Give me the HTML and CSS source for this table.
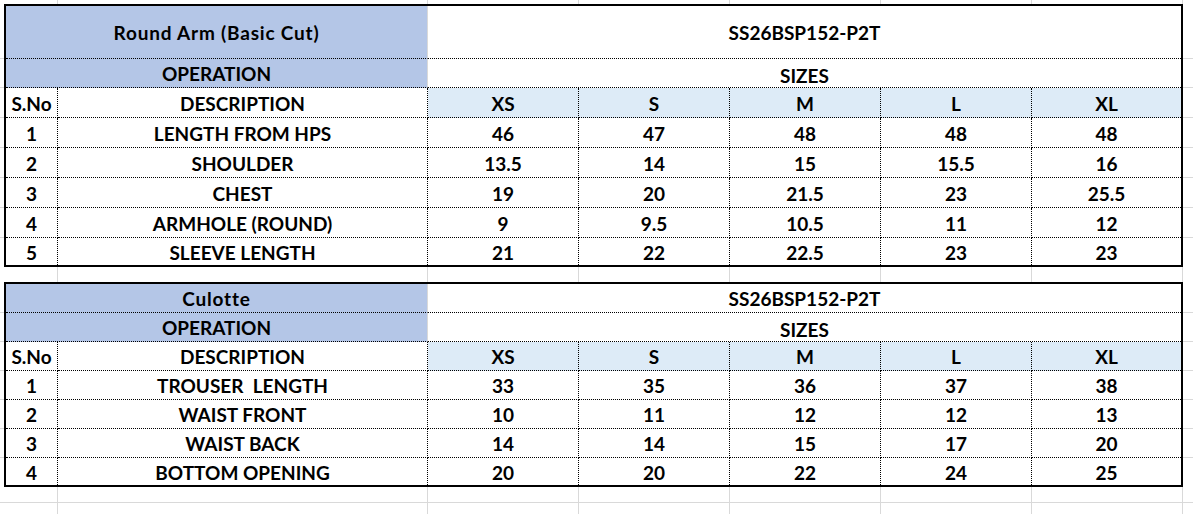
FILE: index.html
```html
<!DOCTYPE html>
<html lang="en">
<head>
<meta charset="utf-8">
<title>Spec sheet</title>
<link rel="stylesheet" href="styles.css">
</head>
<body>
<div class="sheet">
  <div class="spec spec-1">
    <div class="row">
      <div class="c blue span2 name">Round Arm (Basic Cut)</div>
      <div class="c span5">SS26BSP152-P2T</div>
    </div>
    <div class="row">
      <div class="c blue span2">OPERATION</div>
      <div class="c span5 sizes">SIZES</div>
    </div>
    <div class="row">
      <div class="c">S.No</div>
      <div class="c">DESCRIPTION</div>
      <div class="c lb">XS</div>
      <div class="c lb">S</div>
      <div class="c lb">M</div>
      <div class="c lb">L</div>
      <div class="c lb">XL</div>
    </div>
    <div class="row">
      <div class="c">1</div><div class="c">LENGTH FROM HPS</div>
      <div class="c">46</div><div class="c">47</div><div class="c">48</div><div class="c">48</div><div class="c">48</div>
    </div>
    <div class="row">
      <div class="c">2</div><div class="c">SHOULDER</div>
      <div class="c">13.5</div><div class="c">14</div><div class="c">15</div><div class="c">15.5</div><div class="c">16</div>
    </div>
    <div class="row">
      <div class="c">3</div><div class="c">CHEST</div>
      <div class="c">19</div><div class="c">20</div><div class="c">21.5</div><div class="c">23</div><div class="c">25.5</div>
    </div>
    <div class="row">
      <div class="c">4</div><div class="c">ARMHOLE (ROUND)</div>
      <div class="c">9</div><div class="c">9.5</div><div class="c">10.5</div><div class="c">11</div><div class="c">12</div>
    </div>
    <div class="row">
      <div class="c">5</div><div class="c">SLEEVE LENGTH</div>
      <div class="c">21</div><div class="c">22</div><div class="c">22.5</div><div class="c">23</div><div class="c">23</div>
    </div>
  </div>

  <div class="spec spec-2">
    <div class="row">
      <div class="c blue span2 name">Culotte</div>
      <div class="c span5">SS26BSP152-P2T</div>
    </div>
    <div class="row">
      <div class="c blue span2">OPERATION</div>
      <div class="c span5 sizes">SIZES</div>
    </div>
    <div class="row">
      <div class="c">S.No</div>
      <div class="c">DESCRIPTION</div>
      <div class="c lb">XS</div>
      <div class="c lb">S</div>
      <div class="c lb">M</div>
      <div class="c lb">L</div>
      <div class="c lb">XL</div>
    </div>
    <div class="row">
      <div class="c">1</div><div class="c pre">TROUSER  LENGTH</div>
      <div class="c">33</div><div class="c">35</div><div class="c">36</div><div class="c">37</div><div class="c">38</div>
    </div>
    <div class="row">
      <div class="c">2</div><div class="c">WAIST FRONT</div>
      <div class="c">10</div><div class="c">11</div><div class="c">12</div><div class="c">12</div><div class="c">13</div>
    </div>
    <div class="row">
      <div class="c">3</div><div class="c">WAIST BACK</div>
      <div class="c">14</div><div class="c">14</div><div class="c">15</div><div class="c">17</div><div class="c">20</div>
    </div>
    <div class="row">
      <div class="c">4</div><div class="c">BOTTOM OPENING</div>
      <div class="c">20</div><div class="c">20</div><div class="c">22</div><div class="c">24</div><div class="c">25</div>
    </div>
  </div>
</div>
</body>
</html>
```
FILE: styles.css
```css
* {
  box-sizing: border-box;
}

html, body {
  margin: 0;
  padding: 0;
  background: #ffffff;
}

body {
  font-family: Lato, "Liberation Sans", sans-serif;
  color: #000000;
}

/* Excel-like canvas with light gridlines */
.sheet {
  width: 1193px;
  height: 514px;
  overflow: hidden;
  padding: 4px 0 0 4px;
  background-color: #ffffff;
  background-repeat: no-repeat;
  background-image:
    linear-gradient(#d9d9d9, #d9d9d9),
    linear-gradient(#d9d9d9, #d9d9d9),
    linear-gradient(#d9d9d9, #d9d9d9),
    linear-gradient(#d9d9d9, #d9d9d9),
    linear-gradient(#d9d9d9, #d9d9d9),
    linear-gradient(#d9d9d9, #d9d9d9),
    linear-gradient(#d9d9d9, #d9d9d9),
    linear-gradient(#d9d9d9, #d9d9d9),
    linear-gradient(#d9d9d9, #d9d9d9),
    linear-gradient(#d9d9d9, #d9d9d9),
    linear-gradient(#d9d9d9, #d9d9d9),
    linear-gradient(#d9d9d9, #d9d9d9),
    linear-gradient(#d9d9d9, #d9d9d9),
    linear-gradient(#d9d9d9, #d9d9d9),
    linear-gradient(#d9d9d9, #d9d9d9),
    linear-gradient(#d9d9d9, #d9d9d9),
    linear-gradient(#d9d9d9, #d9d9d9),
    linear-gradient(#d9d9d9, #d9d9d9),
    linear-gradient(#d9d9d9, #d9d9d9),
    linear-gradient(#d9d9d9, #d9d9d9),
    linear-gradient(#d9d9d9, #d9d9d9);
  background-size:
    1px 100%, 1px 100%, 1px 100%, 1px 100%, 1px 100%, 1px 100%, 1px 100%,
    100% 1px, 100% 1px, 100% 1px, 100% 1px, 100% 1px, 100% 1px, 100% 1px,
    100% 1px, 100% 1px, 100% 1px, 100% 1px, 100% 1px, 100% 1px, 100% 1px;
  background-position:
    57px 0, 427px 0, 578px 0, 729px 0, 880px 0, 1031px 0, 1182px 0,
    0 58px, 0 87px, 0 117px, 0 147px, 0 177px, 0 207px, 0 237px,
    0 312px, 0 341px, 0 370px, 0 399px, 0 428px, 0 457px, 0 502px;
}

.spec {
  display: grid;
  width: 1179px;
  grid-template-columns: 52px 370px 151px 151px 151px 151px 149px;
  border: 2px solid #000000;
  background: #ffffff;
}

.spec-1 {
  grid-template-rows: 53px 29px 30px 30px 30px 30px 30px 27px;
}

.spec-2 {
  margin-top: 15px;
  grid-template-rows: 29px 29px 29px 29px 29px 29px 27px;
}

.row {
  display: contents;
}

.c {
  display: flex;
  align-items: center;
  justify-content: center;
  border-right: 1px dotted #000000;
  border-bottom: 1px dotted #000000;
  font-size: 19px;
  font-weight: 700;
  line-height: 1;
  white-space: nowrap;
  padding-top: 1px;
}

.row > .c:last-child {
  border-right: 0;
}

.row:last-child > .c {
  border-bottom: 0;
}

.span2 {
  grid-column: span 2;
}

.span5 {
  grid-column: span 5;
}

.blue {
  background: #b4c6e7;
  border-right: 1px solid #d9d9d9;
}

.name {
  letter-spacing: 0.8px;
}

.lb {
  background: #ddebf7;
}

.sizes {
  padding-top: 5px;
}

.pre {
  white-space: pre;
}
```
